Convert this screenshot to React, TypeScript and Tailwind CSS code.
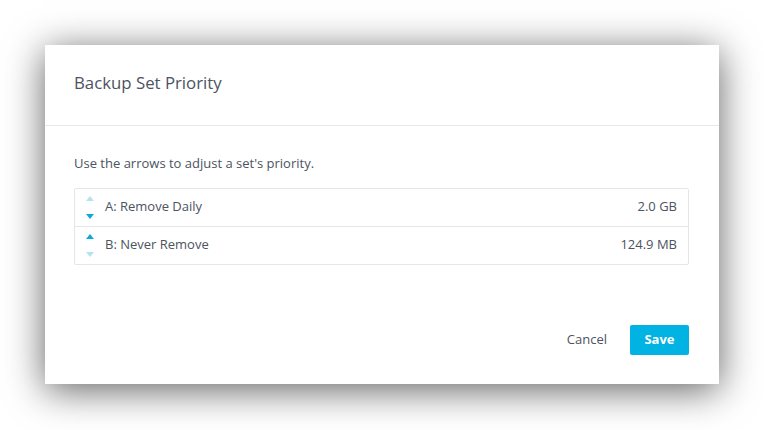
import React from "react";

type Row = { label: string; size: string; upActive: boolean; downActive: boolean };

const rows: Row[] = [
  { label: "A: Remove Daily", size: "2.0 GB", upActive: false, downActive: true },
  { label: "B: Never Remove", size: "124.9 MB", upActive: true, downActive: false },
];

function Arrows({ up, down }: { up: boolean; down: boolean }) {
  return (
    <div className="flex w-[8px] flex-col items-center justify-between h-[23px]">
      <svg width="8" height="5" viewBox="0 0 8 5">
        <path d="M4 0 L8 5 L0 5 Z" fill={up ? "#0fa9d6" : "#b3e4f2"} />
      </svg>
      <svg width="8" height="5" viewBox="0 0 8 5">
        <path d="M0 0 L8 0 L4 5 Z" fill={down ? "#0fa9d6" : "#b3e4f2"} />
      </svg>
    </div>
  );
}

export default function App() {
  return (
    <div className="h-[430px] w-[764px] bg-white pl-[45px] pt-[45px] font-['Open_Sans',sans-serif] text-[#4c5361]">
      <div className="w-[674px] h-[339px] bg-white shadow-[0_6px_36px_rgba(0,0,0,0.62)] flex flex-col">
        <div className="h-[81px] border-b border-[#e6e8eb] flex items-center px-[29px] pb-[4px]">
          <h1 className="text-[16.8px]">Backup Set Priority</h1>
        </div>
        <div className="pl-[29px] pr-[30px] pt-[28px] flex-1">
          <p className="text-[13px]">Use the arrows to adjust a set's priority.</p>
          <div className="mt-[14px] border border-[#e3e6ea] rounded-[2px]">
            {rows.map((r, i) => (
              <div
                key={r.label}
                className={
                  "flex items-center pl-[11px] pr-[11px] text-[13px] " +
                  (i > 0 ? "h-[38px] border-t border-[#e3e6ea]" : "h-[37px]")
                }
              >
                <Arrows up={r.upActive} down={r.downActive} />
                <span className="ml-[11px] flex-1">{r.label}</span>
                <span>{r.size}</span>
              </div>
            ))}
          </div>
        </div>
        <div className="flex items-center justify-end gap-[23px] pl-[29px] pr-[30px] pb-[29px]">
          <button className="text-[13px] text-[#4c5361]">Cancel</button>
          <button className="h-[30px] w-[59px] rounded-[2px] bg-[#00b3e2] text-white text-[13px] font-bold">
            Save
          </button>
        </div>
      </div>
    </div>
  );
}
